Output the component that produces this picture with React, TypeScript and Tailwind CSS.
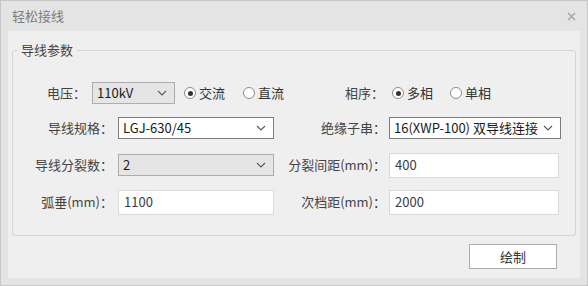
const font = { fontFamily: '"Noto Sans CJK SC", "Noto Sans", sans-serif' };

const Chevron = () => (
  <svg width="10" height="6" viewBox="0 0 10 6" className="shrink-0">
    <path d="M1 1 L5 5 L9 1" fill="none" stroke="#5a5a5a" strokeWidth="1.1" />
  </svg>
);

const Select = ({ value, gray, width }: { value: string; gray?: boolean; width: string }) => (
  <div
    className={`${width} h-[22px] flex items-center justify-between gap-[4px] pl-[4px] pr-[7px] border ${
      gray ? "bg-[#e5e5e5] border-[#adadad]" : "bg-white border-[#7a7a7a]"
    }`}
  >
    <span className="text-[13px] text-[#1a1a1a] whitespace-pre">{value}</span>
    <Chevron />
  </div>
);

const Input = ({ value, width }: { value: string; width: string }) => (
  <div className={`${width} h-[25px] flex items-center px-[5px] bg-white border border-[#dadada]`}>
    <span className="text-[13px] text-[#3a3a4a]">{value}</span>
  </div>
);

const Radio = ({ label, checked }: { label: string; checked?: boolean }) => (
  <div className="flex items-center gap-[3px]">
    <span className="w-[12px] h-[12px] rounded-full border border-[#8c8c8c] bg-white flex items-center justify-center">
      {checked && <span className="w-[5px] h-[5px] rounded-full bg-[#333]" />}
    </span>
    <span className="text-[13px] text-[#333]">{label}</span>
  </div>
);

const Label = ({ text, width }: { text: string; width: string }) => (
  <span className={`${width} text-right text-[13px] text-[#444] whitespace-nowrap`}>{text}</span>
);

export default function App() {
  return (
    <div style={font} className="w-[588px] h-[286px] border border-[#c6c6c6] bg-[#e4e4e4] flex flex-col">
      <div className="h-[30px] flex items-center justify-between pl-[11px] pr-[11px]">
        <span className="text-[13px] text-[#7c7c7c]">轻松接线</span>
        <svg width="9" height="9" viewBox="0 0 9 9">
          <path d="M1 1 L8 8 M8 1 L1 8" stroke="#a8a8a8" strokeWidth="1.6" />
        </svg>
      </div>
      <div className="flex-1 mx-[7px] mb-[7px] bg-[#efefef] flex flex-col">
        <fieldset className="mt-[10px] ml-[4px] w-[564px] h-[195px] border border-[#d5d5d5] rounded-[3px] p-0">
          <legend className="ml-[4px] px-[4px] text-[13px] text-[#444] leading-[18px]">导线参数</legend>

          <div className="mt-[21px] h-[26px] flex items-center">
            <Label text="电压：" width="w-[73px]" />
            <div className="ml-[6px]">
              <Select value="110kV" gray width="w-[83px]" />
            </div>
            <div className="ml-[9px]">
              <Radio label="交流" checked />
            </div>
            <div className="ml-[18px]">
              <Radio label="直流" />
            </div>
            <span className="ml-[61px] text-[13px] text-[#444]">相序：</span>
            <div className="ml-[8px]">
              <Radio label="多相" checked />
            </div>
            <div className="ml-[17px]">
              <Radio label="单相" />
            </div>
          </div>

          <div className="mt-[9px] h-[26px] flex items-center">
            <Label text="导线规格：" width="w-[100px]" />
            <div className="ml-[5px]">
              <Select value="LGJ-630/45" width="w-[156px]" />
            </div>
            <Label text="绝缘子串：" width="w-[112px]" />
            <div className="ml-[3px]">
              <Select value="16(XWP-100) 双导线连接" width="w-[172px]" />
            </div>
          </div>

          <div className="mt-[11px] h-[26px] flex items-center">
            <Label text="导线分裂数：" width="w-[100px]" />
            <div className="ml-[5px]">
              <Select value="2" gray width="w-[156px]" />
            </div>
            <Label text="分裂间距(mm)：" width="w-[112px]" />
            <div className="ml-[3px]">
              <Input value="400" width="w-[170px]" />
            </div>
          </div>

          <div className="mt-[11px] h-[26px] flex items-center">
            <Label text="弧垂(mm)：" width="w-[100px]" />
            <div className="ml-[5px]">
              <Input value="1100" width="w-[156px]" />
            </div>
            <Label text="次档距(mm)：" width="w-[112px]" />
            <div className="ml-[3px]">
              <Input value="2000" width="w-[170px]" />
            </div>
          </div>
        </fieldset>

        <div className="flex justify-end mt-[8px] pr-[23px]">
          <button className="w-[88px] h-[25px] bg-white border border-[#adadad] text-[13px] text-[#333]">
            绘制
          </button>
        </div>
      </div>
    </div>
  );
}
